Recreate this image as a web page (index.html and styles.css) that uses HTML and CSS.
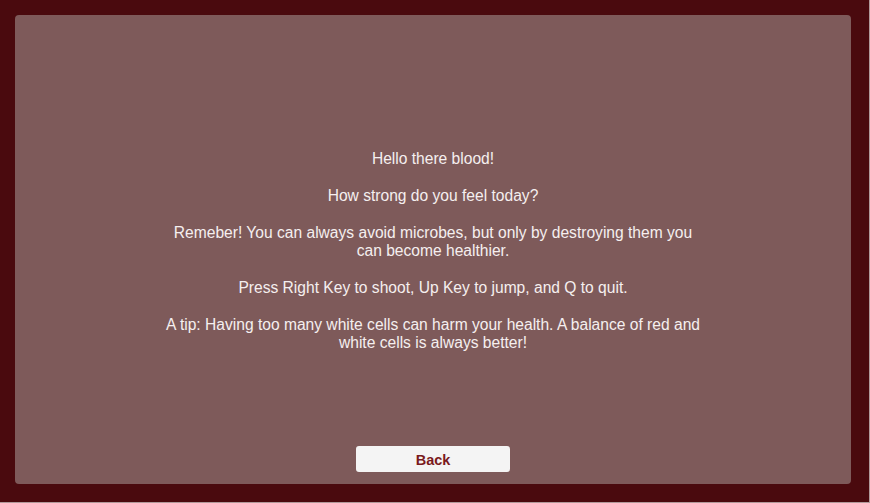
FILE: index.html
```html
<!DOCTYPE html>
<html>
<head>
<meta charset="utf-8">
<link rel="stylesheet" href="styles.css">
</head>
<body>
<div class="frame">
  <div class="panel">
    <div class="message">
      <p>Hello there blood!</p>
      <p>How strong do you feel today?</p>
      <p>Remeber! You can always avoid microbes, but only by destroying them you<br>can become healthier.</p>
      <p>Press Right Key to shoot, Up Key to jump, and Q to quit.</p>
      <p>A tip: Having too many white cells can harm your health. A balance of red and<br>white cells is always better!</p>
    </div>
    <button class="back">Back</button>
  </div>
</div>
</body>
</html>
```
FILE: styles.css
```css
html, body {
  margin: 0;
  padding: 0;
  width: 870px;
  height: 503px;
  overflow: hidden;
  background: #b09a9a;
}
.frame {
  width: 869px;
  height: 502px;
  box-sizing: border-box;
  padding: 15px 18px 18px 15px;
  background: #4a0a0e;
}
.panel {
  height: 100%;
  border-radius: 4px;
  background: #7e5a5a;
  display: grid;
  grid-template: 1fr / 1fr;
  justify-items: center;
  font-family: "Liberation Sans", Arial, sans-serif;
}
.message {
  grid-area: 1 / 1;
  align-self: center;
  text-align: center;
  color: #f5efef;
  font-size: 15.6px;
  line-height: 18px;
  padding-top: 2px;
}
.message p {
  margin: 0 0 19px;
}
.message p:last-child {
  margin-bottom: 0;
}
.back {
  grid-area: 1 / 1;
  align-self: end;
  margin-bottom: 12px;
  width: 154px;
  height: 26px;
  border: none;
  border-radius: 3px;
  background: #f4f4f4;
  color: #7a1a1c;
  font-family: "Liberation Sans", Arial, sans-serif;
  font-weight: bold;
  font-size: 14.5px;
  padding: 2px 0 0;
}
```
